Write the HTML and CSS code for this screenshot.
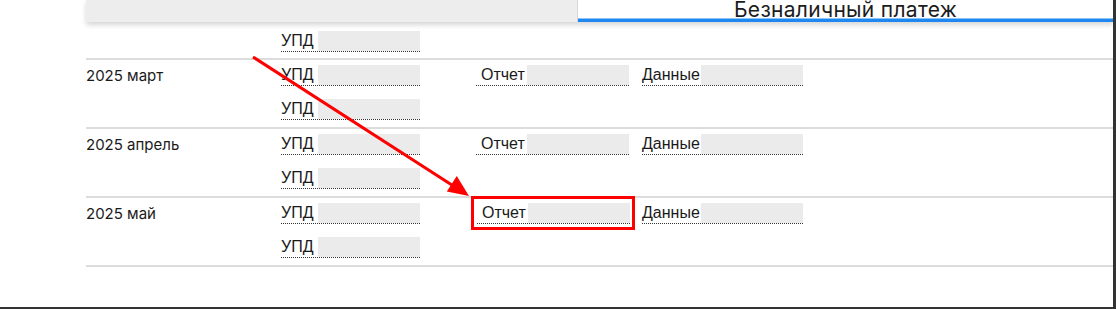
FILE: index.html
```html
<!DOCTYPE html>
<html lang="ru">
<head>
<meta charset="utf-8">
<link rel="stylesheet" href="styles.css">
</head>
<body>
<div class="frame">
  <div class="tabs">
    <div class="tab tab-idle"></div>
    <div class="tab tab-active">Безналичный платеж</div>
  </div>

  <div class="row row-partial">
    <div class="cell date"></div>
    <div class="cell docs">
      <a class="doc"><span class="lbl">УПД</span><span class="redact"></span></a>
    </div>
  </div>

  <div class="row">
    <div class="cell date">2025 март</div>
    <div class="cell docs">
      <a class="doc"><span class="lbl">УПД</span><span class="redact"></span></a>
      <a class="doc"><span class="lbl">УПД</span><span class="redact"></span></a>
    </div>
    <div class="cell report">
      <a class="doc doc-pad"><span class="lbl">Отчет</span><span class="redact"></span></a>
    </div>
    <div class="cell data">
      <a class="doc"><span class="lbl">Данные</span><span class="redact"></span></a>
    </div>
  </div>

  <div class="row">
    <div class="cell date">2025 апрель</div>
    <div class="cell docs">
      <a class="doc"><span class="lbl">УПД</span><span class="redact"></span></a>
      <a class="doc"><span class="lbl">УПД</span><span class="redact"></span></a>
    </div>
    <div class="cell report">
      <a class="doc doc-pad"><span class="lbl">Отчет</span><span class="redact"></span></a>
    </div>
    <div class="cell data">
      <a class="doc"><span class="lbl">Данные</span><span class="redact"></span></a>
    </div>
  </div>

  <div class="row">
    <div class="cell date">2025 май</div>
    <div class="cell docs">
      <a class="doc"><span class="lbl">УПД</span><span class="redact"></span></a>
      <a class="doc"><span class="lbl">УПД</span><span class="redact"></span></a>
    </div>
    <div class="cell report report-shift">
      <a class="doc doc-pad"><span class="lbl">Отчет</span><span class="redact"></span></a>
    </div>
    <div class="cell data">
      <a class="doc"><span class="lbl">Данные</span><span class="redact"></span></a>
    </div>
  </div>

  <div class="highlight"></div>
  <svg class="arrow" width="1116" height="309" viewBox="0 0 1116 309">
    <line x1="253" y1="57" x2="455" y2="187" stroke="#ff0000" stroke-width="3"/>
    <polygon points="469,196 446.8,191.5 456.8,175.9" fill="#ff0000"/>
  </svg>
</div>
</body>
</html>
```

FILE: styles.css
```css
html, body {
  margin: 0;
  padding: 0;
  background: #fff;
}

.frame {
  position: relative;
  width: 1027px;
  height: 307px;
  border-right: 3px solid #333;
  border-bottom: 2px solid #333;
  padding-left: 86px;
  box-sizing: content-box;
  overflow: hidden;
  font-family: "Liberation Sans", Arial, sans-serif;
  color: #1a1a1a;
}

.tabs {
  position: relative;
  z-index: 1;
  display: flex;
  height: 22px;
  box-shadow: 0 3px 5px rgba(0, 0, 0, 0.16);
}

.tab-idle {
  width: 491px;
  background: #ededed;
  border-right: 1px solid #d6d6d6;
}

.tab-active {
  flex: 1;
  background: #fff;
  border-bottom: 3px solid #1e88f0;
  box-shadow: inset 0 -1px 0 #8cc4f5;
  font-family: Inter, "Noto Sans", sans-serif;
  font-size: 21px;
  line-height: 17px;
  padding-top: 1px;
  text-align: center;
  color: #1c1c1c;
  letter-spacing: 0.3px;
  box-sizing: border-box;
  overflow: visible;
}

.row {
  display: grid;
  grid-template-columns: 195px 195px 166px 1fr;
  align-items: start;
  padding: 5px 0 7px;
  border-bottom: 2px solid #dcdcdc;
}

.row-partial {
  padding: 9px 0 6px;
}

.cell {
  display: flex;
  flex-direction: column;
  gap: 13px;
}

.date {
  font-family: Inter, "Noto Sans", sans-serif;
  font-size: 15px;
  line-height: 21px;
  color: #1a1a1a;
}

.doc {
  display: inline-flex;
  align-self: flex-start;
  height: 20px;
  line-height: 20px;
  font-size: 16px;
  color: #1a1a1a;
  border-bottom: 1px dotted #333;
  white-space: nowrap;
}

.doc-pad {
  padding-left: 5px;
}

.report-shift {
  padding-left: 1px;
}

.lbl {
  display: inline-block;
}

.redact {
  display: inline-block;
  width: 102px;
  height: 20px;
  margin-left: 4px;
  background: #ebebeb;
}

.report .redact {
  margin-left: 2px;
}

.data .redact {
  margin-left: 1px;
}

.highlight {
  position: absolute;
  left: 471px;
  top: 196px;
  width: 158px;
  height: 28px;
  border: 3px solid #ff0000;
  z-index: 2;
}

.arrow {
  position: absolute;
  left: 0;
  top: 0;
  z-index: 3;
  pointer-events: none;
}
```
